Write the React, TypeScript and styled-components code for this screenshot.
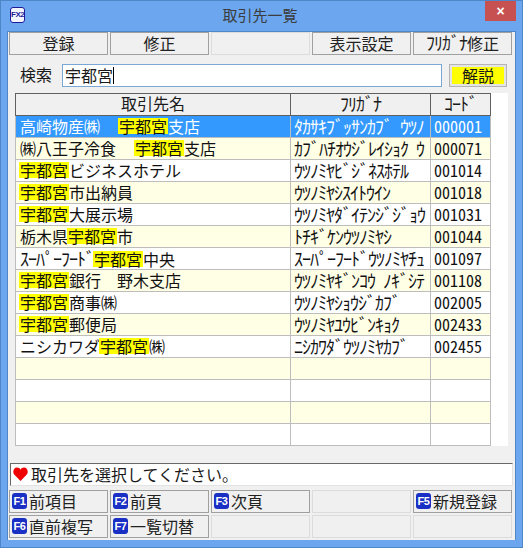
import React from 'react';
import styled, { createGlobalStyle } from 'styled-components';

const GlobalStyle = createGlobalStyle`
  html, body {
    margin: 0;
    padding: 0;
    background: #6ba6ee;
  }
`;

const JP = `"Noto Sans CJK JP", "Liberation Sans", sans-serif`;

const Window = styled.div`
  width: 523px;
  height: 548px;
  box-sizing: border-box;
  display: flex;
  flex-direction: column;
  background: #6ba6ee;
  border: 1px solid #4f86c8;
  font-family: ${JP};
  font-size: 16px;
  color: #1a1a1a;
  overflow: hidden;
`;

const TitleBar = styled.div`
  height: 30px;
  flex: none;
  display: flex;
  align-items: flex-start;
`;

const AppIcon = styled.div`
  width: 15px;
  height: 16px;
  margin: 6px 0 0 9px;
  box-sizing: border-box;
  border: 1px solid #1c1c9a;
  border-radius: 3px;
  background: #f4f4ff;
  color: #1c1c9a;
  font: bold 8px/14px "Liberation Sans", sans-serif;
  text-align: center;
  letter-spacing: -0.5px;
`;

const TitleText = styled.div`
  flex: 1;
  text-align: center;
  font-size: 15px;
  line-height: 20px;
  margin-top: 4px;
  color: #3c3c3c;
  padding-left: 10px;
`;

const CloseButton = styled.div`
  width: 31px;
  height: 20px;
  margin-right: 6px;
  background: #c75050;
  color: #fff;
  font: bold 14px/20px "Liberation Sans", sans-serif;
  text-align: center;
`;

const Client = styled.div`
  flex: 1;
  margin: 0 6px 7px;
  padding: 0 0 0 1px;
  background: #f0f0f0;
  display: flex;
  flex-direction: column;
  border: 1px solid #4f86c8;
  border-bottom: none;
`;

const ButtonRow = styled.div`
  display: grid;
  grid-template-columns: repeat(5, 99px);
  gap: 2px;
`;

const ActionButton = styled.div<{ $off?: boolean; $left?: boolean }>`
  height: 23px;
  box-sizing: border-box;
  display: flex;
  align-items: center;
  justify-content: ${(p) => (p.$left ? 'flex-start' : 'center')};
  gap: 1px;
  padding-left: ${(p) => (p.$left ? '2px' : '0')};
  padding-bottom: 2px;
  background: #f0f0f0;
  border: 1px solid ${(p) => (p.$off ? '#dcdcdc' : '#a0a0a0')};
  color: #222;
  line-height: 18px;
  white-space: pre;
`;

const SearchRow = styled.div`
  display: flex;
  align-items: flex-start;
  margin-top: 9px;
  padding-left: 11px;
`;

const SearchLabel = styled.div`
  width: 42px;
  line-height: 21px;
`;

const SearchInput = styled.div`
  width: 380px;
  height: 23px;
  box-sizing: border-box;
  background: #fff;
  border: 1px solid #7aa7d6;
  line-height: 19px;
  padding: 0 0 1px 2px;
  display: flex;
  align-items: center;
`;

const Caret = styled.span`
  width: 1px;
  height: 17px;
  background: #000;
`;

const HelpButton = styled.div`
  width: 58px;
  height: 23px;
  margin-left: 7px;
  box-sizing: border-box;
  border: 3px solid #e4e4e4;
  outline: 1px solid #b4b4b4;
  outline-offset: -1px;
  background: #ffff00;
  text-align: center;
  line-height: 17px;
`;

const TablePane = styled.div`
  margin: 6px 0 0 6px;
  width: 493px;
  height: 353px;
  background: #fff;
  flex: none;
`;

const Table = styled.div`
  width: 476px;
  display: flex;
  flex-direction: column;
`;

const Columns = styled.div<{ $bg?: string; $line: string }>`
  display: grid;
  grid-template-columns: 275px 140px 60px;
  height: 22px;
  box-sizing: border-box;
  border-left: 1px solid ${(p) => p.$line};
  border-bottom: 1px solid ${(p) => p.$line};
  background: ${(p) => p.$bg || '#fff'};
`;

const HeaderRow = styled(Columns)`
  height: 23px;
  border-top: 1px solid #606060;
  background: #f0f0f0;
`;

const HeadCell = styled.div`
  text-align: center;
  line-height: 18px;
  border-right: 1px solid #606060;
`;

const Cell = styled.div<{ $sel?: boolean; $pad: number }>`
  padding-left: ${(p) => p.$pad}px;
  line-height: 20px;
  white-space: pre;
  color: ${(p) => (p.$sel ? '#fff' : '#111')};
  border-right: 1px solid #bdbdbd;
  box-sizing: border-box;
`;

const Kana = styled.span`
  font-size: 18px;
  letter-spacing: -1px;
  word-spacing: 5px;
`;

const Code = styled.span`
  font-feature-settings: 'hwid';
`;

const Hit = styled.span<{ $gap?: boolean }>`
  display: inline-block;
  height: 16px;
  line-height: 16px;
  background: #ffff00;
  color: #111;
  padding: 0 1px;
  margin-left: ${(p) => (p.$gap ? '2px' : '-1px')};
`;

const StatusBar = styled.div`
  margin: 17px 0 0 1px;
  width: 503px;
  height: 23px;
  box-sizing: border-box;
  background: #fff;
  border-top: 1px solid #696969;
  border-left: 1px solid #696969;
  border-right: 1px solid #e3e3e3;
  border-bottom: 1px solid #e3e3e3;
  display: flex;
  align-items: center;
  padding: 0 0 1px 2px;
  gap: 3px;
  line-height: 19px;
`;

const FnKeys = styled.div`
  margin-top: 4px;
  display: flex;
  flex-direction: column;
  gap: 2px;
`;

const KeyBadge = styled.span`
  flex: none;
  width: 15px;
  height: 16px;
  margin-right: 1px;
  border-radius: 3px;
  background: #1a2fc4;
  color: #fff;
  font: bold 11px/16px "Liberation Sans", sans-serif;
  letter-spacing: -0.5px;
  text-align: center;
`;

const HeartIcon = () => (
  <svg width="15" height="14" viewBox="0 0 15 14">
    <path d="M7.5 14 L1.2 7.6 C-0.8 5 0.6 0.6 4 0.6 C5.6 0.6 6.9 1.5 7.5 2.8 C8.1 1.5 9.4 0.6 11 0.6 C14.4 0.6 15.8 5 13.8 7.6 Z" fill="#f00000" />
  </svg>
);

type Row = { name: React.ReactNode; kana: string; code: string };

const Q = '宇都宮';

const rows: Row[] = [
  { name: <>高崎物産㈱　<Hit $gap>{Q}</Hit>支店</>, kana: 'ﾀｶｻｷﾌﾞｯｻﾝｶﾌﾞ ｳﾂﾉ', code: '000001' },
  { name: <>㈱八王子冷食　<Hit $gap>{Q}</Hit>支店</>, kana: 'ｶﾌﾞﾊﾁｵｳｼﾞﾚｲｼｮｸ ｳ', code: '000071' },
  { name: <><Hit>{Q}</Hit>ビジネスホテル</>, kana: 'ｳﾂﾉﾐﾔﾋﾞｼﾞﾈｽﾎﾃﾙ', code: '001014' },
  { name: <><Hit>{Q}</Hit>市出納員</>, kana: 'ｳﾂﾉﾐﾔｼｽｲﾄｳｲﾝ', code: '001018' },
  { name: <><Hit>{Q}</Hit>大展示場</>, kana: 'ｳﾂﾉﾐﾔﾀﾞｲﾃﾝｼﾞｼﾞｮｳ', code: '001031' },
  { name: <>栃木県<Hit>{Q}</Hit>市</>, kana: 'ﾄﾁｷﾞｹﾝｳﾂﾉﾐﾔｼ', code: '001044' },
  { name: <><Kana>ｽｰﾊﾟｰﾌｰﾄﾞ</Kana><Hit>{Q}</Hit>中央</>, kana: 'ｽｰﾊﾟｰﾌｰﾄﾞｳﾂﾉﾐﾔﾁｭ', code: '001097' },
  { name: <><Hit>{Q}</Hit>銀行　野木支店</>, kana: 'ｳﾂﾉﾐﾔｷﾞﾝｺｳ ﾉｷﾞｼﾃ', code: '001108' },
  { name: <><Hit>{Q}</Hit>商事㈱</>, kana: 'ｳﾂﾉﾐﾔｼｮｳｼﾞｶﾌﾞ', code: '002005' },
  { name: <><Hit>{Q}</Hit>郵便局</>, kana: 'ｳﾂﾉﾐﾔﾕｳﾋﾞﾝｷｮｸ', code: '002433' },
  { name: <>ニシカワダ<Hit>{Q}</Hit>㈱</>, kana: 'ﾆｼｶﾜﾀﾞｳﾂﾉﾐﾔｶﾌﾞ', code: '002455' },
  { name: '', kana: '', code: '' },
  { name: '', kana: '', code: '' },
  { name: '', kana: '', code: '' },
  { name: '', kana: '', code: '' },
];

const fnRows: { key?: string; label?: string }[][] = [
  [{ key: 'F1', label: '前項目' }, { key: 'F2', label: '前頁' }, { key: 'F3', label: '次頁' }, {}, { key: 'F5', label: '新規登録' }],
  [{ key: 'F6', label: '直前複写' }, { key: 'F7', label: '一覧切替' }, {}, {}, {}],
];

export default function App() {
  return (
    <Window>
      <GlobalStyle />
      <TitleBar>
        <AppIcon>FX2</AppIcon>
        <TitleText>取引先一覧</TitleText>
        <CloseButton>×</CloseButton>
      </TitleBar>
      <Client>
        <ButtonRow>
          <ActionButton>登録</ActionButton>
          <ActionButton>修正</ActionButton>
          <ActionButton $off />
          <ActionButton>表示設定</ActionButton>
          <ActionButton><span><Kana>ﾌﾘｶﾞﾅ</Kana>修正</span></ActionButton>
        </ButtonRow>
        <SearchRow>
          <SearchLabel>検索</SearchLabel>
          <SearchInput>
            宇都宮
            <Caret />
          </SearchInput>
          <HelpButton>解説</HelpButton>
        </SearchRow>
        <TablePane>
          <Table>
            <HeaderRow $line="#606060">
              <HeadCell>取引先名</HeadCell>
              <HeadCell><Kana>ﾌﾘｶﾞﾅ</Kana></HeadCell>
              <HeadCell><Kana>ｺｰﾄﾞ</Kana></HeadCell>
            </HeaderRow>
            {rows.map((r, i) => {
              const sel = i === 0;
              const bg = sel ? '#3399ff' : i % 2 === 1 ? '#ffffe6' : '#ffffff';
              return (
                <Columns key={i} $bg={bg} $line="#bdbdbd">
                  <Cell $sel={sel} $pad={4}>{r.name}</Cell>
                  <Cell $sel={sel} $pad={3}><Kana>{r.kana}</Kana></Cell>
                  <Cell $sel={sel} $pad={3}><Code>{r.code}</Code></Cell>
                </Columns>
              );
            })}
          </Table>
        </TablePane>
        <StatusBar>
          <HeartIcon />
          取引先を選択してください。
        </StatusBar>
        <FnKeys>
          {fnRows.map((keys, y) => (
            <ButtonRow key={y}>
              {keys.map((k, x) => (
                <ActionButton key={x} $off={!k.key} $left>
                  {k.key && <KeyBadge>{k.key}</KeyBadge>}
                  {k.label}
                </ActionButton>
              ))}
            </ButtonRow>
          ))}
        </FnKeys>
      </Client>
    </Window>
  );
}
